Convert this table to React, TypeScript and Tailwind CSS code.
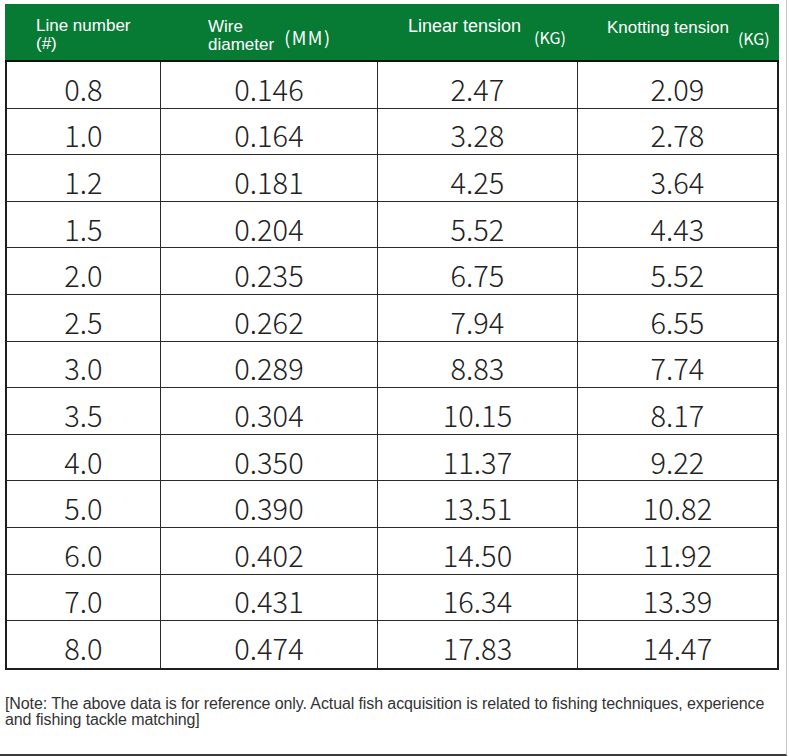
import React from "react";

const rows: [string, string, string, string][] = [
  ["0.8", "0.146", "2.47", "2.09"],
  ["1.0", "0.164", "3.28", "2.78"],
  ["1.2", "0.181", "4.25", "3.64"],
  ["1.5", "0.204", "5.52", "4.43"],
  ["2.0", "0.235", "6.75", "5.52"],
  ["2.5", "0.262", "7.94", "6.55"],
  ["3.0", "0.289", "8.83", "7.74"],
  ["3.5", "0.304", "10.15", "8.17"],
  ["4.0", "0.350", "11.37", "9.22"],
  ["5.0", "0.390", "13.51", "10.82"],
  ["6.0", "0.402", "14.50", "11.92"],
  ["7.0", "0.431", "16.34", "13.39"],
  ["8.0", "0.474", "17.83", "14.47"],
];

const head = "font-['Liberation_Sans',Arial,sans-serif] text-[17px] leading-[18px] text-white";
const unit = "font-['Noto_Sans_CJK_SC',sans-serif] text-white";

export default function App() {
  return (
    <div className="w-[787px] h-[756px] bg-white border-r border-r-[#c4c4c4] border-b-2 border-b-[#3a3a3a]">
      <div className="pt-[4px] pl-[5px]">
        <div className="w-[774px]">
          <div className="grid grid-cols-[156px_217px_200px_201px] h-[58px] bg-[#077a34] border-b-2 border-b-[#111]">
            <div className={`pl-[31px] pt-[13px] ${head}`}>
              <div>Line number</div>
              <div>(#)</div>
            </div>
            <div className="pl-[47px] pt-[14px] flex items-start">
              <div className={head}>
                <div>Wire</div>
                <div>diameter</div>
              </div>
              <div className={`${unit} text-[18px] tracking-[1.5px] ml-[10px] mt-[9px] leading-[20px]`}>(MM)</div>
            </div>
            <div className="pl-[30px] pt-[13px] flex items-start">
              <div className={`${head} text-[18px]`}>Linear tension</div>
              <div className={`${unit} text-[16px] ml-[13px] mt-[11px] leading-[18px]`}>(KG)</div>
            </div>
            <div className="pl-[29px] pt-[15px] flex items-start">
              <div className={`${head} text-[14.5px]`}>Knotting tension</div>
              <div className={`${unit} text-[16px] ml-[9px] mt-[10px] leading-[18px]`}>(KG)</div>
            </div>
          </div>
          <div className="border-l-2 border-r-2 border-b-2 border-[#1e1e1e]">
            {rows.map((r, i) => (
              <div
                key={i}
                className={`grid grid-cols-[154px_217px_200px_199px] h-[46.6px] ${i < rows.length - 1 ? "border-b border-b-[#2a2a2a]" : ""}`}
              >
                {r.map((v, j) => (
                  <div
                    key={j}
                    className={`flex items-center justify-center pt-[7px] font-['Noto_Sans_CJK_SC',sans-serif] font-light text-[29px] leading-none text-[#222] ${j < 3 ? "border-r-[1.5px] border-r-[#2a2a2a]" : ""}`}
                  >
                    {v}
                  </div>
                ))}
              </div>
            ))}
          </div>
          <p className="mt-[26px] w-[780px] font-['Liberation_Sans',Arial,sans-serif] text-[16px] tracking-[-0.1px] leading-[16px] text-[#333]">
            [Note: The above data is for reference only. Actual fish acquisition is related to fishing techniques, experience and fishing tackle matching]
          </p>
        </div>
      </div>
    </div>
  );
}
